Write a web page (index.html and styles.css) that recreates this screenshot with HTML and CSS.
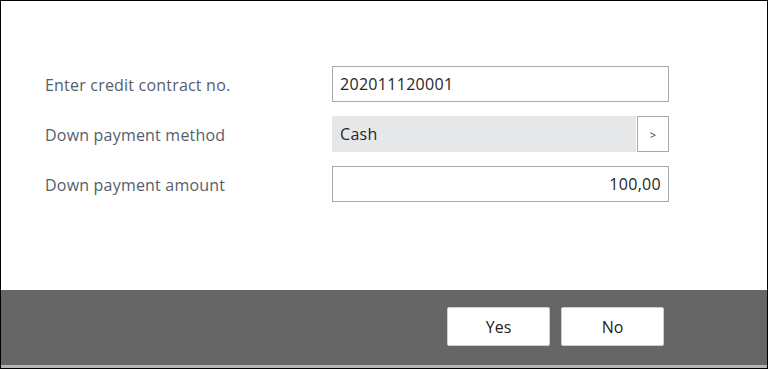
FILE: index.html
```html
<!DOCTYPE html>
<html>
<head>
<meta charset="utf-8">
<link rel="stylesheet" href="styles.css">
</head>
<body>
<div class="dialog">
  <div class="content">
    <div class="form">
      <div class="label">Enter credit contract no.</div>
      <div class="field"><div class="input">202011120001</div></div>
      <div class="label">Down payment method</div>
      <div class="field lookup"><div class="input readonly">Cash</div><div class="lookup-btn">&gt;</div></div>
      <div class="label">Down payment amount</div>
      <div class="field"><div class="input num">100,00</div></div>
    </div>
  </div>
  <div class="footer">
    <button class="btn">Yes</button>
    <button class="btn">No</button>
  </div>
  <div class="strip"></div>
</div>
</body>
</html>
```
FILE: styles.css
```css
html, body {
  margin: 0;
  padding: 0;
  background: #ffffff;
}
.dialog {
  box-sizing: border-box;
  width: 768px;
  height: 369px;
  border: 1px solid #000;
  display: flex;
  flex-direction: column;
  font-family: "Open Sans", "Noto Sans", sans-serif;
}
.content {
  height: 289px;
  background: #fff;
  padding: 65px 0 0 44px;
  box-sizing: border-box;
}
.form {
  display: grid;
  grid-template-columns: 287px 337px;
  row-gap: 14px;
  align-items: center;
}
.label {
  font-size: 16px;
  color: #56606b;
  letter-spacing: 0.2px;
  padding-top: 1px;
}
.field {
  height: 36px;
  display: flex;
}
.input {
  flex: 1;
  box-sizing: border-box;
  height: 36px;
  border: 1px solid #a9a9a9;
  padding: 0 7px;
  display: flex;
  align-items: center;
  font-size: 16px;
  color: #262626;
  letter-spacing: 0.3px;
}
.input.readonly {
  border: none;
  background: #e6e7e9;
  margin-right: 1px;
  padding-left: 8px;
}
.input.num {
  justify-content: flex-end;
}
.lookup-btn {
  box-sizing: border-box;
  width: 32px;
  height: 36px;
  border: 1px solid #a9a9a9;
  display: flex;
  align-items: center;
  justify-content: center;
  font-size: 11px;
  color: #333;
}
.footer {
  height: 75px;
  background: #666666;
  display: flex;
  justify-content: flex-end;
  align-items: flex-start;
  gap: 11px;
  padding: 17px 103px 0 0;
  box-sizing: border-box;
}
.btn {
  width: 103px;
  height: 39px;
  background: #fff;
  border: 1px solid #d0d0d0;
  border-radius: 2px;
  font-family: "Open Sans", "Noto Sans", sans-serif;
  font-size: 16px;
  color: #222;
  padding: 0;
}
.strip {
  height: 3px;
  background: #b4b4b4;
}
```
